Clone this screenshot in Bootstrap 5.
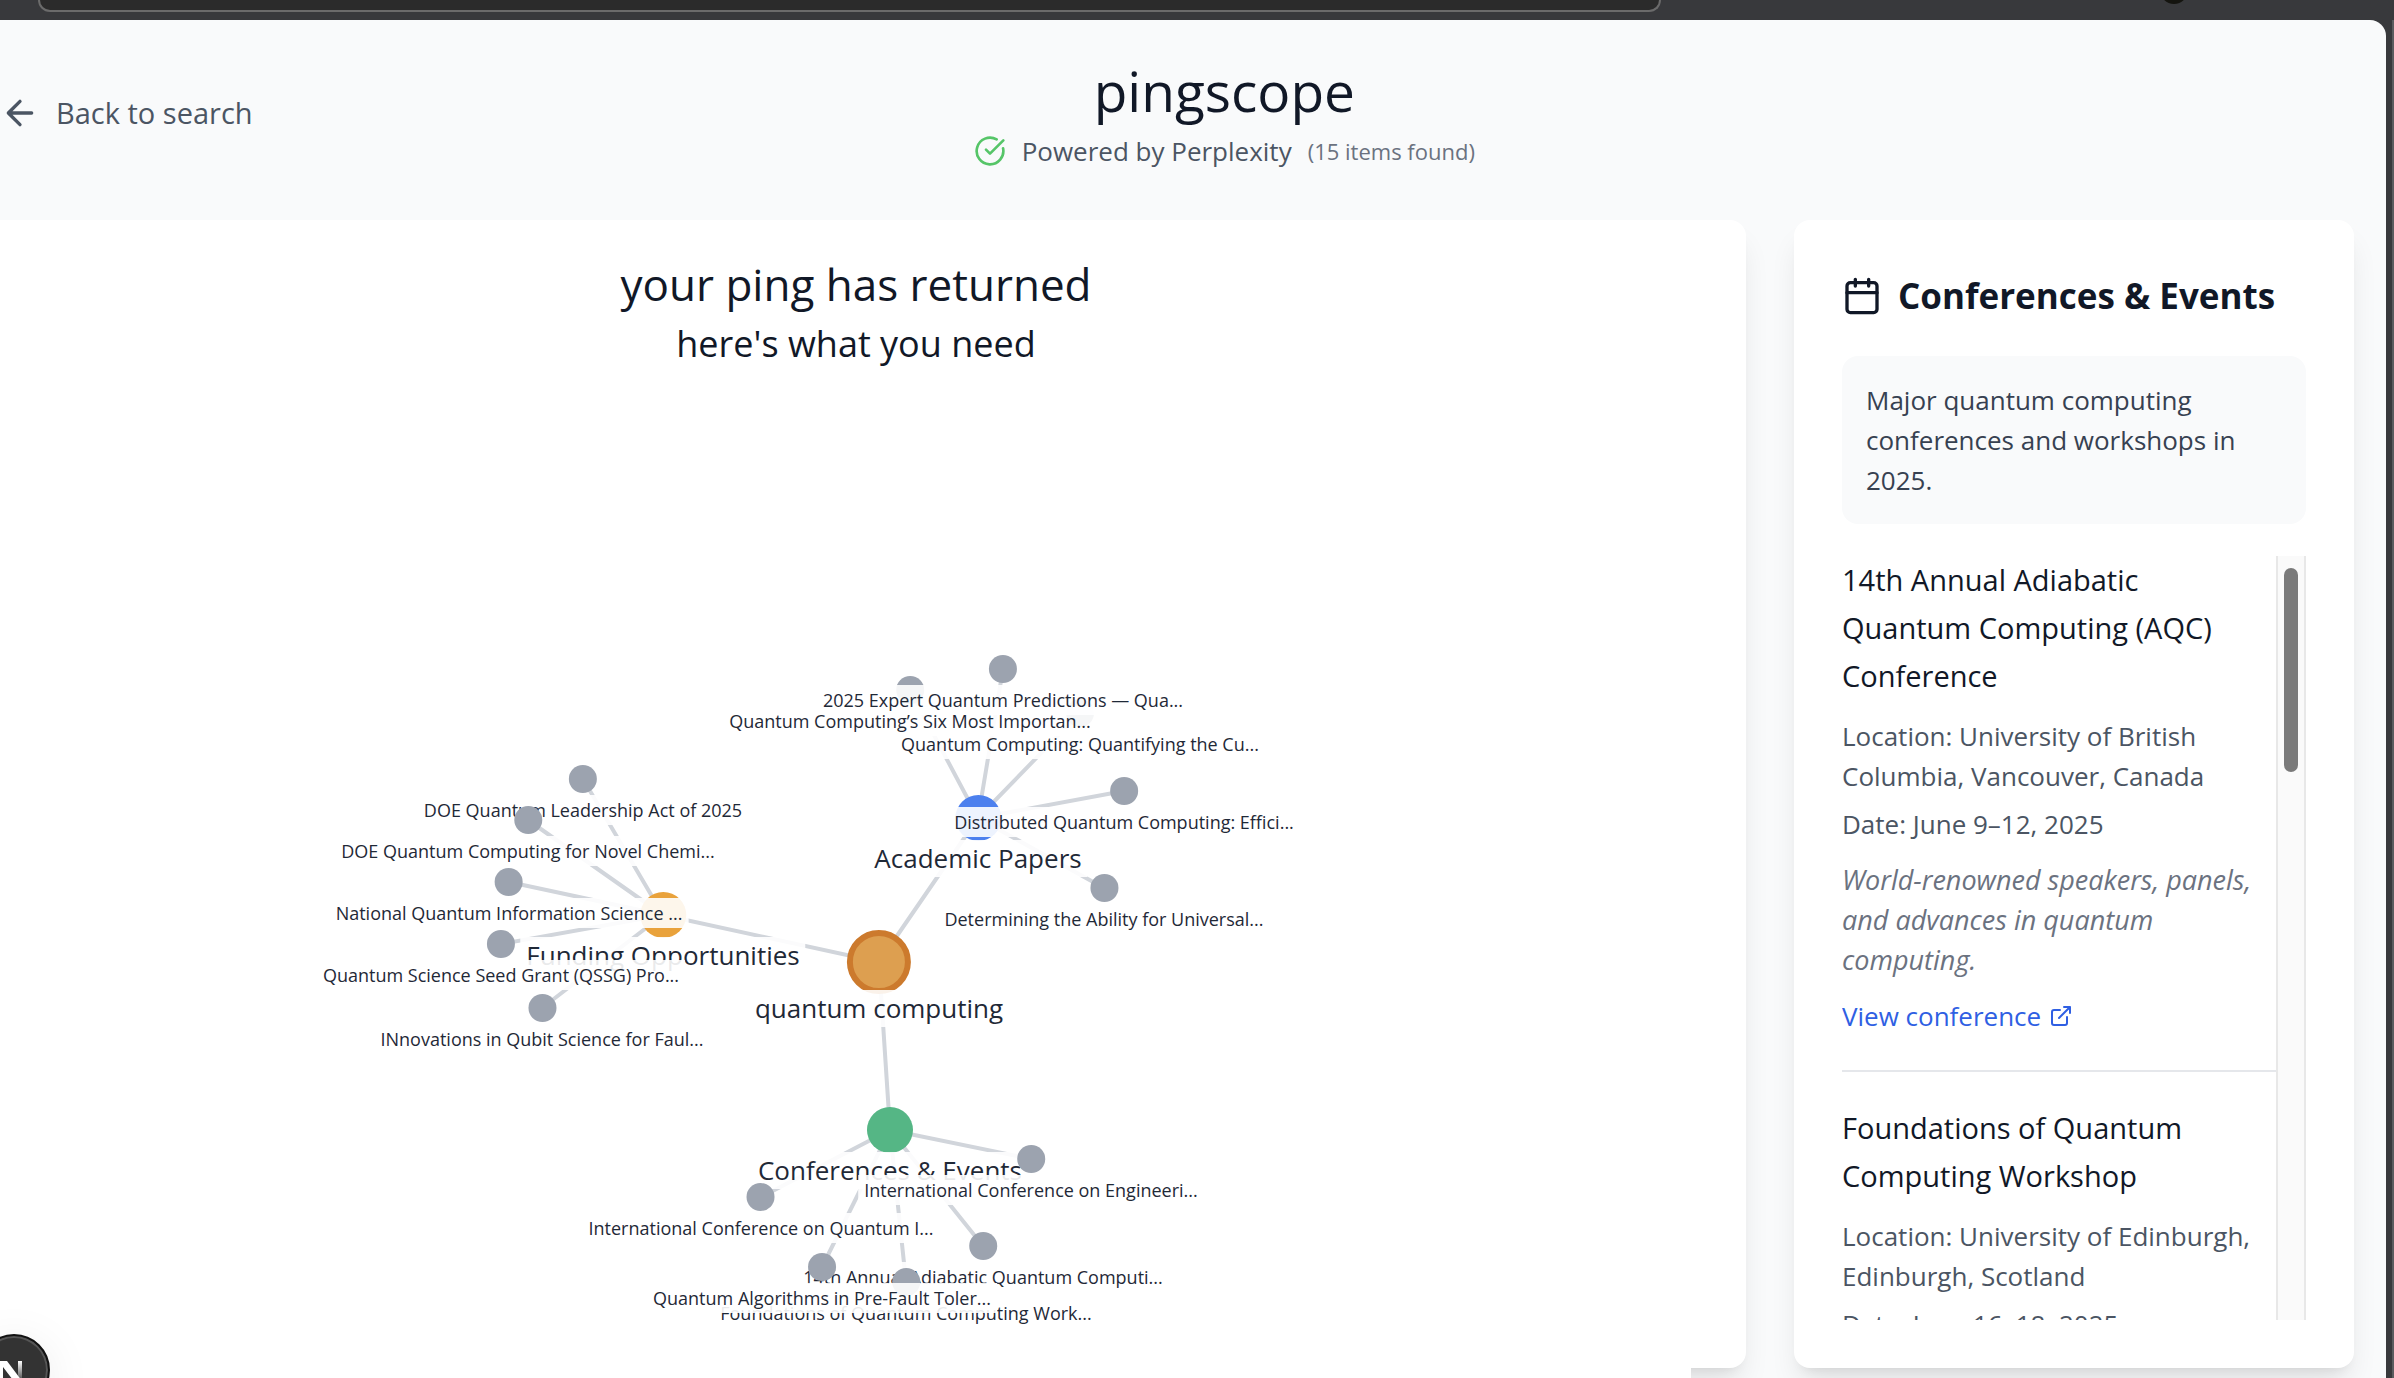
<!DOCTYPE html>
<html lang="en">
<head>
<meta charset="utf-8">
<meta name="viewport" content="width=device-width, initial-scale=1">
<title>pingscope</title>
<link rel="stylesheet" href="https://cdn.jsdelivr.net/npm/bootstrap@5.3.0/dist/css/bootstrap.min.css">
<style>
  body { font-family: "Open Sans", "Noto Sans", sans-serif; background: #38393c; color: #111827; }
  .browser-strip { height: 20px; flex: none; padding: 0 733px 0 38px; background: #38393c; position: relative; }
  .address-bar { height: 12px; background: #2b2b2b; border: 2px solid #6b6b6b; border-top: 0; border-radius: 0 0 26px 26px; }
  .avatar { position: absolute; right: 206px; top: -24px; width: 28px; height: 28px; border-radius: 50%; background: #14140f; }
  .window-edge { padding-right: 6px; border-right: 2px solid #5a5b5e; }
  .viewport { background: #f9fafb; border-top-right-radius: 16px; }
  .page-head { height: 200px; flex: none; padding: 28px 32px 42px 0; }
  .back-link { font-size: 29px; line-height: 40px; color: #4b5563; gap: 16px; }
  .head-spacer { width: 158px; }
  .brand-title { font-size: 55px; line-height: 72px; font-weight: 400; }
  .status-line { font-size: 26px; line-height: 40px; color: #4b5563; gap: 16px; margin-top: 4px; }
  .status-count { font-size: 22px; color: #6b7280; }
  .panels { gap: 48px; padding: 0 32px 10px 0; }
  .panel { background: #fff; border-radius: 16px; box-shadow: 0 20px 30px -6px rgba(0,0,0,.1), 0 8px 12px -8px rgba(0,0,0,.1); }
  .graph-panel { margin-left: -34px; position: relative; }
  .overflow-strip { position: absolute; left: 0; right: 55px; top: 100%; height: 10px; background: #fff; }
  .graph-title { padding-top: 34px; }
  .graph-title h2 { font-size: 44px; line-height: 60px; font-weight: 400; margin: 0; }
  .graph-title h3 { font-size: 36px; line-height: 60px; font-weight: 400; margin: 0; }
  .graph { position: absolute; left: 34px; top: -220px; width: 1712px; height: 1378px; pointer-events: none; }
  .graph svg { position: absolute; left: 0; top: 0; }
  .gnode { position: absolute; display: flex; flex-direction: column; align-items: center; transform: translateX(-50%); white-space: nowrap; color: #1f2937; }
  .gnode i { border-radius: 50%; flex: none; }
  .gnode span { position: relative; background: rgba(255,255,255,.9); }
  .g-item { margin-top: -14px; font-size: 18px; line-height: 30px; }
  .g-item i { width: 28px; height: 28px; background: #9ca3af; }
  .g-item span { margin-top: 2px; padding: 0 6px; }
  .g-cat { margin-top: -23px; font-size: 26px; line-height: 37px; }
  .g-cat i { width: 46px; height: 46px; }
  .g-cat span { margin-top: -1px; padding: 0 6px; }
  .g-root { margin-top: -32px; font-size: 26px; line-height: 37px; }
  .g-root i { width: 64px; height: 64px; background: #dd9f50; border: 6px solid #cc7a2d; }
  .g-root span { margin-top: -4px; padding: 0 6px; }
  .side-panel { flex: 0 0 560px; padding: 48px 48px 48px; }
  .side-title { font-size: 35px; line-height: 56px; font-weight: 700; gap: 16px; margin: 0 0 32px; }
  .summary { background: #f9fafb; border-radius: 16px; padding: 24px; font-size: 26px; line-height: 40px; color: #374151; margin: 0 0 32px; height: 168px; flex: none; }
  .results { min-height: 0; height: 764px; overflow: hidden; }
  .event-title { font-size: 29px; line-height: 48px; font-weight: 400; margin: 0 0 16px; padding-right: 16px; }
  .event-line { font-size: 26px; line-height: 40px; color: #4b5563; margin: 0 0 8px; }
  .event-note { font-size: 27px; line-height: 40px; color: #6b7280; font-style: italic; margin: 16px 0; }
  .event-link { font-size: 26px; line-height: 40px; color: #2f5fe3; gap: 8px; }
  .event { padding-bottom: 34px; margin-bottom: 32px; border-bottom: 2px solid #e5e7eb; }
  .scroll-track { width: 30px; flex: none; background: #fafafa; border: 2px solid #e8e8e8; border-width: 0 2px; padding: 12px 6px; }
  .scroll-thumb { height: 204px; border-radius: 7px; background: #7a7a7a; }
  .dev-badge { position: fixed; left: -22px; bottom: -28px; width: 72px; height: 72px; border: 2px solid #111; border-radius: 50%; background: #333; box-shadow: inset 0 0 0 2px #555, 0 8px 48px rgba(0,0,0,.08); padding: 0; overflow: hidden; }
</style>
<script src="https://cdn.jsdelivr.net/npm/bootstrap@5.3.0/dist/js/bootstrap.bundle.min.js"></script>
</head>
<body class="vh-100 overflow-hidden d-flex flex-column">
<div class="browser-strip"><div class="address-bar"></div><div class="avatar"></div></div>
<div class="window-edge flex-grow-1 d-flex flex-column">
<div class="viewport flex-grow-1 d-flex flex-column overflow-hidden">

  <header class="page-head d-flex justify-content-between align-items-center">
    <a href="#" class="back-link d-flex align-items-center text-decoration-none">
      <svg width="40" height="40" viewBox="0 0 24 24" fill="none" stroke="currentColor" stroke-width="2" stroke-linecap="round" stroke-linejoin="round"><path d="m12 19-7-7 7-7M19 12H5"/></svg>
      Back to search
    </a>
    <div class="text-center">
      <h1 class="brand-title m-0">pingscope</h1>
      <div class="status-line d-flex align-items-center justify-content-center">
        <svg width="32" height="32" viewBox="0 0 24 24" fill="none" stroke="#56c568" stroke-width="2" stroke-linecap="round" stroke-linejoin="round"><path d="M21.8 10A10 10 0 1 1 17 3.34"/><path d="m9 11 3 3L22 4"/></svg>
        <span>Powered by Perplexity</span>
        <span class="status-count">(15 items found)</span>
      </div>
    </div>
    <div class="head-spacer"></div>
  </header>

  <main class="panels d-flex flex-grow-1">
    <section class="panel graph-panel flex-grow-1">
      <div class="graph-title text-center">
        <h2>your ping has returned</h2>
        <h3>here's what you need</h3>
      </div>
      <div class="overflow-strip"></div>
      <div class="graph">
        <svg width="1712" height="1378" stroke="#d1d5db" stroke-width="4">
          <path d="M879 962 978 818M879 962 663 915M879 962 890 1130"/>
          <path d="M978 818 1080 713M978 818 910 690M978 818 1003 669M978 818 1124 791M978 818 1104 888"/>
          <path d="M663 915 583 779M663 915 528 820M663 915 509 882M663 915 501 944M663 915 542 1008"/>
          <path d="M890 1130 983 1246M890 1130 906 1282M890 1130 822 1267M890 1130 761 1197M890 1130 1031 1159"/>
        </svg>
        <div class="gnode g-root" style="left:879px;top:962px"><i></i><span>quantum computing</span></div>
        <div class="gnode g-cat" style="left:978px;top:818px"><i style="background:#4c80ee"></i><span>Academic Papers</span></div>
        <div class="gnode g-cat" style="left:663px;top:915px"><i style="background:#e9a23b"></i><span>Funding Opportunities</span></div>
        <div class="gnode g-cat" style="left:890px;top:1130px"><i style="background:#55b685"></i><span>Conferences &amp; Events</span></div>
        <div class="gnode g-item" style="left:1080px;top:713px"><i></i><span>Quantum Computing: Quantifying the Cu...</span></div>
        <div class="gnode g-item" style="left:910px;top:690px"><i></i><span>Quantum Computing’s Six Most Importan...</span></div>
        <div class="gnode g-item" style="left:1003px;top:669px"><i></i><span>2025 Expert Quantum Predictions — Qua...</span></div>
        <div class="gnode g-item" style="left:1124px;top:791px"><i></i><span>Distributed Quantum Computing: Effici...</span></div>
        <div class="gnode g-item" style="left:1104px;top:888px"><i></i><span>Determining the Ability for Universal...</span></div>
        <div class="gnode g-item" style="left:583px;top:779px"><i></i><span>DOE Quantum Leadership Act of 2025</span></div>
        <div class="gnode g-item" style="left:528px;top:820px"><i></i><span>DOE Quantum Computing for Novel Chemi...</span></div>
        <div class="gnode g-item" style="left:509px;top:882px"><i></i><span>National Quantum Information Science ...</span></div>
        <div class="gnode g-item" style="left:501px;top:944px"><i></i><span>Quantum Science Seed Grant (QSSG) Pro...</span></div>
        <div class="gnode g-item" style="left:542px;top:1008px"><i></i><span>INnovations in Qubit Science for Faul...</span></div>
        <div class="gnode g-item" style="left:983px;top:1246px"><i></i><span>14th Annual Adiabatic Quantum Computi...</span></div>
        <div class="gnode g-item" style="left:906px;top:1282px"><i></i><span>Foundations of Quantum Computing Work...</span></div>
        <div class="gnode g-item" style="left:822px;top:1267px"><i></i><span>Quantum Algorithms in Pre-Fault Toler...</span></div>
        <div class="gnode g-item" style="left:761px;top:1197px"><i></i><span>International Conference on Quantum I...</span></div>
        <div class="gnode g-item" style="left:1031px;top:1159px"><i></i><span>International Conference on Engineeri...</span></div>
      </div>
    </section>

    <aside class="panel side-panel d-flex flex-column">
      <h2 class="side-title d-flex align-items-center">
        <svg width="40" height="40" viewBox="0 0 24 24" fill="none" stroke="currentColor" stroke-width="2" stroke-linecap="round" stroke-linejoin="round"><path d="M8 2v4M16 2v4M3 10h18"/><rect x="3" y="4" width="18" height="18" rx="2"/></svg>
        Conferences &amp; Events
      </h2>
      <p class="summary">Major quantum computing conferences and workshops in 2025.</p>
      <div class="results d-flex">
        <div class="flex-grow-1">
          <article class="event">
            <h3 class="event-title">14th Annual Adiabatic Quantum Computing (AQC) Conference</h3>
            <p class="event-line">Location: University of British Columbia, Vancouver, Canada</p>
            <p class="event-line">Date: June 9–12, 2025</p>
            <p class="event-note">World-renowned speakers, panels, and advances in quantum computing.</p>
            <a href="#" class="event-link d-flex align-items-center text-decoration-none">View conference
              <svg width="24" height="24" viewBox="0 0 24 24" fill="none" stroke="currentColor" stroke-width="2" stroke-linecap="round" stroke-linejoin="round"><path d="M15 3h6v6M10 14 21 3M18 13v6a2 2 0 0 1-2 2H5a2 2 0 0 1-2-2V8a2 2 0 0 1 2-2h6"/></svg>
            </a>
          </article>
          <article>
            <h3 class="event-title">Foundations of Quantum Computing Workshop</h3>
            <p class="event-line">Location: University of Edinburgh, Edinburgh, Scotland</p>
            <p class="event-line">Date: June 16–18, 2025</p>
          </article>
        </div>
        <div class="scroll-track"><div class="scroll-thumb"></div></div>
      </div>
    </aside>
  </main>
</div>
</div>
<button class="dev-badge" type="button" aria-label="Developer tools">
  <svg class="d-block" width="68" height="68" viewBox="0 0 68 68">
    <defs><linearGradient id="stem" x1="0" y1="0" x2="0" y2="1"><stop offset="0" stop-color="#fff"/><stop offset="1" stop-color="#fff" stop-opacity="0"/></linearGradient></defs>
    <path d="M18 25h9l27 36-5 4-26-34v20h-5z" fill="#fff"/><path d="M38 25h4v22h-4z" fill="url(#stem)"/>
  </svg>
</button>
</body>
</html>
